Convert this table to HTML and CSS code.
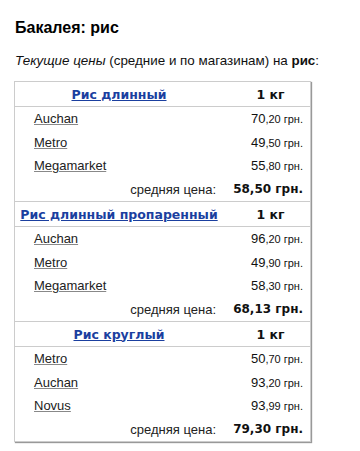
FILE: index.html
```html
<!DOCTYPE html>
<html lang="ru">
<head>
<meta charset="utf-8">
<link rel="stylesheet" href="styles.css">
</head>
<body>
<h1 class="title">Бакалея: рис</h1>
<p class="lead"><i>Текущие цены</i> (средние и по магазинам) на <b>рис</b>:</p>
<div class="prices">
  <div class="group">
    <div class="head"><a class="prod" href="#">Рис длинный</a><span class="unit">1 кг</span></div>
    <div class="row"><a class="shop" href="#">Auchan</a><span class="price">70<small>,20 грн.</small></span></div>
    <div class="row"><a class="shop" href="#">Metro</a><span class="price">49<small>,50 грн.</small></span></div>
    <div class="row"><a class="shop" href="#">Megamarket</a><span class="price">55<small>,80 грн.</small></span></div>
    <div class="row avg"><span class="avg-label">средняя цена:</span><span class="avg-price">58,50 грн.</span></div>
  </div>
  <div class="group">
    <div class="head"><a class="prod" href="#">Рис длинный пропаренный</a><span class="unit">1 кг</span></div>
    <div class="row"><a class="shop" href="#">Auchan</a><span class="price">96<small>,20 грн.</small></span></div>
    <div class="row"><a class="shop" href="#">Metro</a><span class="price">49<small>,90 грн.</small></span></div>
    <div class="row"><a class="shop" href="#">Megamarket</a><span class="price">58<small>,30 грн.</small></span></div>
    <div class="row avg"><span class="avg-label">средняя цена:</span><span class="avg-price">68,13 грн.</span></div>
  </div>
  <div class="group">
    <div class="head"><a class="prod" href="#">Рис круглый</a><span class="unit">1 кг</span></div>
    <div class="row"><a class="shop" href="#">Metro</a><span class="price">50<small>,70 грн.</small></span></div>
    <div class="row"><a class="shop" href="#">Auchan</a><span class="price">93<small>,20 грн.</small></span></div>
    <div class="row"><a class="shop" href="#">Novus</a><span class="price">93<small>,99 грн.</small></span></div>
    <div class="row avg"><span class="avg-label">средняя цена:</span><span class="avg-price">79,30 грн.</span></div>
  </div>
</div>
</body>
</html>
```
FILE: styles.css
```css
html, body {
  margin: 0;
  background: #fff;
}
body {
  padding: 18px 15px;
  font-family: "Liberation Sans", Arial, sans-serif;
  font-size: 13px;
  color: #111;
}
.title {
  margin: 0;
  font-size: 16px;
  line-height: 20px;
  font-weight: bold;
  color: #000;
}
.lead {
  margin: 15px 0 12px;
  font-size: 13.4px;
  line-height: 16px;
}
.prices {
  width: 295px;
  margin-left: -1px;
  border: 1px solid #ccc;
  box-shadow: 1px 1px 1px #999;
}
.group + .group {
  border-top: 1px solid #ccc;
}
.head {
  display: grid;
  grid-template-columns: 208px 1fr;
  height: 24px;
  align-items: center;
  border-bottom: 1px solid #ccc;
  font-family: "DejaVu Sans", Verdana, sans-serif;
  font-weight: bold;
  font-size: 12.5px;
  text-align: center;
}
.prod {
  color: #1b3f9f;
  text-decoration: underline;
}
.unit {
  padding-left: 8px;
  color: #111;
}
.row {
  display: flex;
  justify-content: space-between;
  align-items: center;
  height: 23.5px;
  padding: 0 7px 0 19px;
}
.shop {
  color: #222;
  text-decoration: underline;
  text-decoration-color: #888;
}
.price {
  font-size: 13px;
}
.price small {
  font-size: 11px;
}
.avg {
  display: grid;
  grid-template-columns: 201px 1fr;
  padding: 0 7px 0 0;
}
.avg-label {
  text-align: right;
  color: #222;
}
.avg-price {
  text-align: right;
  font-family: "DejaVu Sans", Verdana, sans-serif;
  font-weight: bold;
  font-size: 12px;
  color: #111;
}
```
